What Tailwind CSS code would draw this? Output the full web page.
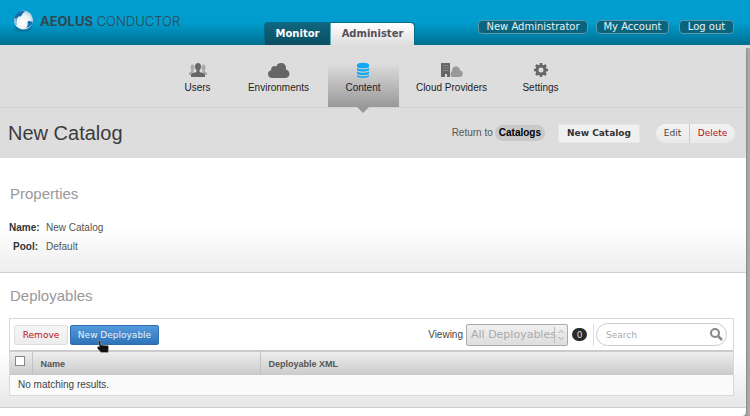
<!DOCTYPE html>
<html lang="en">
<head>
<meta charset="utf-8">
<meta name="viewport" content="width=device-width, initial-scale=1">
<title>New Catalog</title>
<script src="https://cdn.jsdelivr.net/npm/@tailwindcss/browser@4"></script>
</head>
<body class="flex min-h-screen flex-col overflow-hidden bg-[linear-gradient(#ddd_48px,#aaa_48px)] font-['Liberation_Sans',Arial,sans-serif] text-[10px] leading-4 text-[#444]">

<header class="flex h-[45px] shrink-0 items-end bg-linear-to-b from-[#009dce] from-50% to-[#006f92]">
  <a href="#" class="mb-[10px] ml-[10px] flex h-7 w-[254px] items-center gap-1 font-[Inter,sans-serif] text-[13px] text-[#34474e]">
    <svg class="h-7 w-[26px] shrink-0" viewBox="0 0 26 28">
      <defs>
        <radialGradient id="ball" cx=".45" cy=".6" r=".65"><stop offset="0" stop-color="#fff"/><stop offset=".65" stop-color="#e7edf5"/><stop offset="1" stop-color="#94bdda"/></radialGradient>
        <radialGradient id="shade"><stop offset="0" stop-color="#00466f" stop-opacity=".7"/><stop offset="1" stop-color="#00466f" stop-opacity="0"/></radialGradient>
      </defs>
      <ellipse cx="13" cy="21" rx="11" ry="5" fill="url(#shade)"/>
      <circle cx="13.500" cy="13" r="9.500" fill="url(#ball)"/>
      <path d="M15 4.500C10 3 5 6 4.300 11c-.3 3 .6 5.500 2.200 7.200C6 14.500 6.500 11.500 8.500 9.500c1.500.3 3-.3 3.500-1.800C12.500 6.500 13.500 5.500 15 4.500z" fill="#1470ad"/>
      <path d="M4.300 11.500c-.2 3 .8 5.300 2.300 6.800C6 15.500 6 13 6.800 11.300z" fill="#9fc6e0"/>
      <path d="M22.700 15.500c-1.700-2-4.700-2-5.200-.3.500 2 .3 3.800-1.200 5.800 3.200-.7 5.500-2.500 6.400-5.500z" fill="#1475b4"/>
    </svg>
    <span class="whitespace-nowrap"><b>AEOLUS</b> <span class="font-light">CONDUCTOR</span></span>
  </a>
  <nav class="flex h-[23px] rounded-t-sm border border-b-0 border-[#056b8a] font-['DejaVu_Sans',sans-serif] font-bold" aria-label="Sections">
    <a href="#" class="flex w-[66px] items-center justify-center border-r border-[#5faabd] bg-linear-to-b from-[#10667f] to-[#0a4e62] text-white">Monitor</a>
    <a href="#" class="flex w-[83px] items-center justify-center rounded-tr-sm bg-linear-to-b from-white to-[#dedede] text-[#554f59]">Administer</a>
  </nav>
  <nav class="mr-4 mb-[11px] ml-auto flex gap-2 font-['DejaVu_Sans',sans-serif] text-[#e5f3f7]" aria-label="Account">
    <a href="#" class="flex h-[14px] w-[110px] items-center justify-center rounded border border-[#5798aa] bg-[#0b647e]">New Administrator</a>
    <a href="#" class="flex h-[14px] w-[73px] items-center justify-center rounded border border-[#5798aa] bg-[#0b647e]">My Account</a>
    <a href="#" class="ml-[2px] flex h-[14px] w-[55px] items-center justify-center rounded border border-[#5798aa] bg-[#0b647e]">Log out</a>
  </nav>
</header>

<div class="mr-1 flex grow flex-col rounded-br bg-white shadow-[1px_4px_2px_#888]">
  <nav class="flex h-[63px] shrink-0 items-stretch justify-center border-b border-[#d3d3d3] bg-[#ddd] pr-1 text-[#222]" aria-label="Administer">
    <a href="#" class="flex w-[72px] flex-col items-center pt-[17px]">
      <svg class="h-[18px] w-[22px]" viewBox="0 0 22 18"><g fill="#aaa"><ellipse cx="5.500" cy="5.500" rx="2" ry="3"/><ellipse cx="16.500" cy="5.500" rx="2" ry="3"/><path d="M2 13v-2c0-1 2.500-1 2.500-3h2v5zM20 13v-2c0-1-2.500-1-2.500-3h-2v5z"/></g><path d="M11 1c2 0 3 1.300 3 3.500 0 1.500-.6 3-1.500 3.700v1.300c0 1 5 1.300 5.500 3V15H4v-2.500c.5-1.700 5.500-2 5.500-3V8.200C8.600 7.500 8 6 8 4.500 8 2.300 9 1 11 1z" fill="#666"/></svg>
      <span>Users</span>
    </a>
    <a href="#" class="flex w-[90px] flex-col items-center pt-[17px]">
      <svg class="h-[18px] w-[22px]" viewBox="0 0 22 18"><path d="M4.500 16C2 16 0 14.500 0 12c0-2.200 1.500-3.500 3-3.800C3 5.500 4.500 4 6.500 4c.7 0 1.300.2 1.800.5C9 2.500 10.500 1 13 1c3 0 5 2 5 5 0 .5 0 1-.2 1.500 2 .3 3.700 2 3.700 4.200C21.500 14.500 19.500 16 17 16z" fill="#666"/></svg>
      <span>Environments</span>
    </a>
    <a href="#" aria-current="page" class="relative mx-1 flex w-[71px] flex-col items-center bg-linear-to-b from-[#ddd] from-30% to-[#999] pt-[17px]">
      <svg class="h-[18px] w-[14px]" viewBox="0 0 14 18"><g fill="#10a9f2"><path d="M1 3v2c1.500 1.800 10.500 1.800 12 0V3z"/><ellipse cx="7" cy="2.700" rx="6" ry="2"/><path d="M1 6c2 1.700 10 1.700 12 0v2.200c-1.500 1.800-10.500 1.800-12 0zM1 9.500c2 1.700 10 1.700 12 0v2.200c-1.500 1.800-10.500 1.800-12 0zM1 13c2 1.700 10 1.700 12 0v1.200c-1.500 2.300-10.500 2.300-12 0z"/></g></svg>
      <span>Content</span>
      <svg class="absolute top-full h-[6px] w-3" viewBox="0 0 12 6"><path d="M0 0h12L6 6z" fill="#999"/></svg>
    </a>
    <a href="#" class="flex w-[98px] flex-col items-center pt-[17px]">
      <svg class="h-[18px] w-[22px]" viewBox="0 0 22 18"><path d="M11 15c-2-1-2-4.500 0-5.500C11 6.500 12 5 14 4.600c3-.5 5 1.400 5 4C23 9 23 15 18 15z" fill="#999"/><path d="M0 1h9v14H6v-3H4v3H0z" fill="#666"/><path d="M2 3.500h1.500M4 3.500h1.500M6 3.500h1.500M2 6h1.500M4 6h1.500M6 6h1.500M2 8.500h1.500M4 8.500h1.500M6 8.500h1.500" stroke="#999" stroke-width=".8"/></svg>
      <span>Cloud Providers</span>
    </a>
    <a href="#" class="flex w-20 flex-col items-center pt-[17px]">
      <svg class="h-[18px] w-4" viewBox="0 0 16 18"><g stroke="#666" fill="none"><circle cx="8" cy="8" r="4" stroke-width="3"/><path d="M8 1v3M8 12v3M1 8h3M12 8h3M3 3l2 2M11 11l2 2M3 13l2-2M11 5l2-2" stroke-width="2.500"/></g></svg>
      <span>Settings</span>
    </a>
  </nav>

  <section class="flex h-[50px] shrink-0 items-center bg-[#ddd] pr-[11px] pl-2">
    <h1 class="mr-auto text-[20px] leading-6 text-[#3b3b3b]">New Catalog</h1>
    <span class="text-[#555]">Return to</span>
    <a href="#" class="ml-[2px] rounded-full bg-[#c8c8c8] px-1 font-bold text-black">Catalogs</a>
    <a href="#" class="ml-[13px] flex h-[19px] w-[82px] items-center justify-center border border-[#e6e6e6] bg-[#f0f0f0] font-['DejaVu_Sans',sans-serif] text-[9px] font-bold text-[#333]">New Catalog</a>
    <div class="ml-4 flex h-[19px] overflow-hidden rounded-full bg-linear-to-b from-[#f3f3f3] to-[#e9e9e9] font-['DejaVu_Sans',sans-serif] text-[9px]">
      <button type="button" class="w-[34px] border-r border-[#ccc] text-[#444]">Edit</button>
      <button type="button" class="w-[45px] text-[#b8101c]">Delete</button>
    </div>
  </section>

  <section class="h-[115px] shrink-0 border-b border-[#d0d0d0] bg-linear-to-b from-white from-60% to-[#eee] px-[9px] pt-[26px]">
    <h2 class="pl-px text-[15px] leading-5 text-[#999]">Properties</h2>
    <dl class="mt-4 grid grid-cols-[29px_1fr] gap-x-2 gap-y-[3px] text-[#555]">
      <dt class="text-right font-bold text-[#333]">Name:</dt><dd>New Catalog</dd>
      <dt class="text-right font-bold text-[#333]">Pool:</dt><dd>Default</dd>
    </dl>
  </section>

  <section class="h-[135px] shrink-0 border-b border-[#d0d0d0] bg-linear-to-b from-white from-60% to-[#e7e7e7] pt-[13px] pr-3 pl-[9px]">
    <h2 class="pl-px text-[15px] leading-5 text-[#999]">Deployables</h2>
    <div class="mt-3 border border-[#d8d8d8] bg-white">
      <div class="flex h-[31px] items-center gap-[2px] pr-[6px] pl-1 font-['DejaVu_Sans',sans-serif] text-[9px]">
        <button type="button" class="h-5 w-[54px] rounded-xs border border-[#ddd] bg-linear-to-b from-[#f5f5f5] to-[#ededed] text-[#b8101c]">Remove</button>
        <button type="button" class="relative h-5 w-[89px] rounded-xs border border-[#2e6dad] bg-linear-to-b from-[#539adc] to-[#2e73b8] text-[#e8f1fa]">New Deployable
          <svg class="absolute top-[14px] left-[26px] h-[14px] w-3" viewBox="0 0 12 14"><path d="M1 .5h2L4 5l7 .5.7 1.500-.5 5.500H4L.5 8.500V6.500H2.500z" fill="#111" stroke="#bbb" stroke-width=".5"/></svg>
        </button>
        <label for="viewing" class="mr-px ml-auto font-['Liberation_Sans',sans-serif] text-[10px]">Viewing</label>
        <div class="relative">
          <select id="viewing" class="block h-[22px] w-[102px] appearance-none rounded-xs border border-[#aaa] bg-linear-to-b from-[#f1f1f1] to-[#ddd] pl-1 text-[11px] text-[#aaa]"><option>All Deployables</option></select>
          <svg class="pointer-events-none absolute top-[2px] right-[1px] h-[18px] w-[14px]" viewBox="0 0 14 18"><path d="M1.500 1v16" stroke="#bbb"/><path d="M5.500 7l2.500-2.500L10.500 7M5.500 11l2.500 2.500 2.500-2.500" fill="none" stroke="#aaa"/></svg>
        </div>
        <span class="ml-[2px] flex h-[13px] w-[15px] items-center justify-center rounded-full bg-[#2b2b2b] text-[#ddd]">0</span>
        <div class="ml-1 h-[22px] border-l border-[#ddd]"></div>
        <div class="relative">
          <input type="search" aria-label="Search" placeholder="Search" class="block h-[23px] w-[131px] rounded-full border border-[#ccc] bg-white pr-6 pl-[9px] text-[9px] placeholder:text-[#aaa]">
          <svg class="pointer-events-none absolute top-1 right-1 h-[14px] w-[14px]" viewBox="0 0 14 14"><circle cx="6" cy="6" r="4" fill="none" stroke="#888" stroke-width="2"/><path d="M9 9l4 4" stroke="#888" stroke-width="2.500"/></svg>
        </div>
      </div>
      <table class="w-full table-fixed border-collapse text-left">
        <thead>
          <tr class="h-6 border-y border-[#c9c9c9] bg-linear-to-b from-[#eee] to-[#ccc] text-[9px] text-[#555]">
            <th scope="col" class="w-[22px] border-r border-[#c4c4c4] pb-1 pl-[5px]"><input type="checkbox" aria-label="Select all" class="block size-[10px] appearance-none border border-[#888] bg-white"></th>
            <th scope="col" class="w-[228px] border-r border-[#c4c4c4] pt-[2px] pl-2">Name</th>
            <th scope="col" class="pt-[2px] pl-2">Deployable XML</th>
          </tr>
        </thead>
        <tbody><tr class="h-5 bg-[#fafafa]"><td colspan="3" class="pl-2">No matching results.</td></tr></tbody>
      </table>
    </div>
  </section>
</div>
</body>
</html>
